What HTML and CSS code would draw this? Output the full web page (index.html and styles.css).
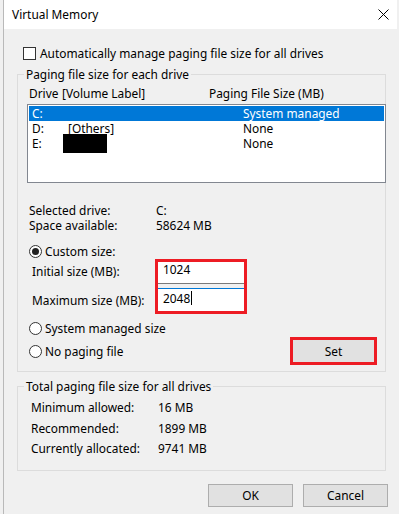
FILE: index.html
```html
<!DOCTYPE html>
<html lang="en">
<head>
    <meta charset="UTF-8">
    <title>Virtual Memory</title>
    <link rel="stylesheet" href="styles.css">
</head>
<body>
    <div class="dialog">
        <div class="titlebar">
            <span class="title">Virtual Memory</span>
            <svg class="close" width="11" height="11" viewBox="0 0 11 11">
                <path d="M0.5 0.5 L10.5 10.5 M10.5 0.5 L0.5 10.5" stroke="#000" stroke-width="1" fill="none"/>
            </svg>
        </div>

        <div class="content">
            <div class="check-row">
                <span class="checkbox"></span>
                <span>Automatically manage paging file size for all drives</span>
            </div>

            <div class="group group-drives">
                <div class="group-title">Paging file size for each drive</div>

                <div class="list-head">
                    <span class="head-drive">Drive</span>
                    <span class="head-label">[Volume Label]</span>
                    <span>Paging File Size (MB)</span>
                </div>

                <div class="listbox">
                    <div class="list-row selected">
                        <span class="cell-drive">C:</span>
                        <span class="cell-label"></span>
                        <span>System managed</span>
                    </div>
                    <div class="list-row">
                        <span class="cell-drive">D:</span>
                        <span class="cell-label">[Others]</span>
                        <span>None</span>
                    </div>
                    <div class="list-row">
                        <span class="cell-drive">E:</span>
                        <span class="cell-label"><span class="redacted"></span></span>
                        <span>None</span>
                    </div>
                </div>

                <div class="info-row first">
                    <span class="info-label">Selected drive:</span>
                    <span>C:</span>
                </div>
                <div class="info-row">
                    <span class="info-label">Space available:</span>
                    <span>58624 MB</span>
                </div>

                <div class="radio-row custom">
                    <span class="radio checked"></span>
                    <span>Custom size:</span>
                </div>

                <div class="size-fields">
                    <div class="size-labels">
                        <span>Initial size (MB):</span>
                        <span>Maximum size (MB):</span>
                    </div>
                    <div class="highlight size-box">
                        <div class="field field-initial">1024</div>
                        <div class="field-gap"></div>
                        <div class="field field-max">2048<span class="caret"></span></div>
                    </div>
                </div>

                <div class="radio-row system">
                    <span class="radio"></span>
                    <span>System managed size</span>
                </div>

                <div class="last-row">
                    <div class="radio-row">
                        <span class="radio"></span>
                        <span>No paging file</span>
                    </div>
                    <div class="highlight set-box">
                        <div class="btn set-btn">Set</div>
                    </div>
                </div>
            </div>

            <div class="group group-total">
                <div class="group-title">Total paging file size for all drives</div>
                <div class="total-row">
                    <span class="total-label">Minimum allowed:</span>
                    <span>16 MB</span>
                </div>
                <div class="total-row">
                    <span class="total-label">Recommended:</span>
                    <span>1899 MB</span>
                </div>
                <div class="total-row">
                    <span class="total-label">Currently allocated:</span>
                    <span>9741 MB</span>
                </div>
            </div>

            <div class="buttons">
                <div class="btn">OK</div>
                <div class="btn">Cancel</div>
            </div>
        </div>
    </div>
</body>
</html>
```

FILE: styles.css
```css
* {
    margin: 0;
    padding: 0;
    box-sizing: border-box;
}

body {
    background-color: #f0f0f0;
    font-family: "Noto Sans", "Open Sans", sans-serif;
    font-size: 11.9px;
    line-height: 15px;
    color: #000;
    width: 399px;
    height: 514px;
    overflow: hidden;
}

.dialog {
    margin-left: 3px;
    width: 394px;
    height: 514px;
    border-left: 1px solid #b9b9b9;
}

/* title bar */
.titlebar {
    height: 29px;
    background-color: #fff;
    display: flex;
    align-items: center;
    justify-content: space-between;
    padding: 0 8px 0 8px;
}

.title {
    margin-top: -1px;
}

.close {
    display: block;
    margin-top: -1px;
}

.content {
    padding-left: 13px;
}

/* auto manage checkbox */
.check-row {
    display: flex;
    align-items: center;
    height: 13px;
    margin-top: 18px;
    margin-left: 6px;
}

.checkbox {
    width: 13px;
    height: 13px;
    border: 1px solid #333;
    background-color: #fff;
    margin-right: 4px;
}

/* group boxes */
.group {
    width: 369px;
    border: 1px solid #dcdcdc;
}

.group-title {
    display: table;
    margin: -8px 0 0 6px;
    padding: 0 2px;
    background-color: #f0f0f0;
}

.group-drives {
    margin-top: 14px;
    height: 298px;
}

.list-head {
    display: flex;
    margin-top: 4px;
    padding-left: 11px;
}

.head-drive {
    width: 33px;
}

.head-label {
    width: 147px;
}

/* drive list */
.listbox {
    margin: 3px 0 0 9px;
    width: 359px;
    height: 79px;
    border: 1px solid #828790;
    background-color: #fff;
    padding: 1px;
}

.list-row {
    display: flex;
    align-items: center;
    height: 15px;
    padding-left: 3px;
}

.list-row.selected {
    background-color: #0078d7;
    color: #fff;
}

.cell-drive {
    width: 36px;
}

.cell-label {
    width: 175px;
    display: flex;
    align-items: center;
}

.redacted {
    width: 44px;
    height: 19px;
    margin-left: -5px;
    background-color: #000;
}

/* selected drive info */
.info-row {
    display: flex;
    padding-left: 11px;
}

.info-row.first {
    margin-top: 20px;
}

.info-label {
    width: 127px;
}

/* radio options */
.radio-row {
    display: flex;
    align-items: center;
    padding-left: 11px;
    height: 15px;
}

.radio-row.custom {
    margin-top: 11px;
}

.radio-row.system {
    margin-top: 7px;
}

.radio {
    width: 13px;
    height: 13px;
    border: 1px solid #333;
    border-radius: 50%;
    background-color: #fff;
    margin-right: 3px;
    display: flex;
    align-items: center;
    justify-content: center;
}

.radio.checked::after {
    content: '';
    width: 7px;
    height: 7px;
    border-radius: 50%;
    background-color: #222;
}

/* custom size fields */
.size-fields {
    display: flex;
}

.size-labels {
    width: 137px;
    padding: 5px 0 0 14px;
    display: flex;
    flex-direction: column;
    gap: 14px;
}

.highlight {
    border: 3px solid #ed1c24;
}

.size-box {
    width: 92px;
    height: 55px;
}

.field {
    background-color: #fff;
    padding-left: 5px;
}

.field-initial {
    height: 22px;
    border-bottom: 1px solid #7a7a7a;
}

.field-gap {
    height: 4px;
    background-color: #f0f0f0;
}

.field-max {
    height: 23px;
    border-top: 1px solid #0078d7;
    padding-top: 2px;
    display: flex;
    align-items: flex-start;
}

.caret {
    width: 1px;
    height: 14px;
    margin-left: 1px;
    background-color: #000;
}

.last-row {
    display: flex;
    align-items: center;
    justify-content: space-between;
    height: 28px;
    margin-top: 1px;
    padding-right: 8px;
}

.set-box {
    width: 87px;
    height: 28px;
}

.btn {
    background-color: #e1e1e1;
    border: 1px solid #adadad;
    display: flex;
    align-items: center;
    justify-content: center;
}

.set-btn {
    height: 100%;
    border: none;
}

/* totals */
.group-total {
    margin-top: 14px;
    height: 85px;
}

.total-row {
    display: flex;
    padding-left: 13px;
    margin-top: 6px;
}

.total-row:last-child {
    margin-top: 5px;
}

.total-label {
    width: 127px;
}

/* dialog buttons */
.buttons {
    display: flex;
    gap: 10px;
    margin: 13px 0 0 191px;
}

.buttons .btn {
    width: 85px;
    height: 23px;
}
```
